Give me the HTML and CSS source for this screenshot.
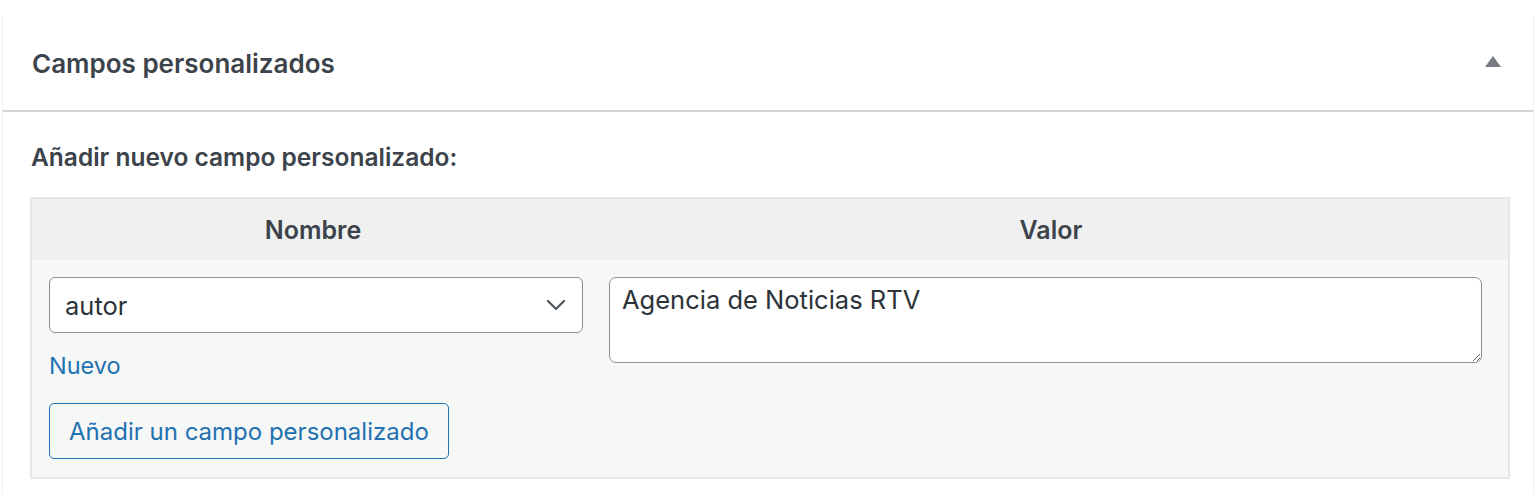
FILE: index.html
```html
<!DOCTYPE html>
<html lang="es">
<head>
<meta charset="utf-8">
<title>Campos personalizados</title>
<link rel="stylesheet" href="styles.css">
</head>
<body>
<div class="postbox">
  <div class="postbox-header">
    <h2 class="hndle">Campos personalizados</h2>
    <span class="toggle-arrow" aria-hidden="true"></span>
  </div>
  <div class="inside">
    <p class="newmeta-title">Añadir nuevo campo personalizado:</p>
    <div class="newmeta">
      <div class="newmeta-head">
        <div class="col-name">Nombre</div>
        <div class="col-value">Valor</div>
      </div>
      <div class="newmeta-body">
        <div class="cell-left">
          <div class="select">
            <span>autor</span>
            <svg class="chevron" width="20" height="12" viewBox="0 0 20 12"><path d="M2 2 L10 10 L18 2" fill="none" stroke="#50575e" stroke-width="2.2" stroke-linecap="round" stroke-linejoin="round"/></svg>
          </div>
          <a class="new-link" href="#">Nuevo</a>
          <button class="add-btn" type="button">Añadir un campo personalizado</button>
        </div>
        <div class="cell-right">
          <textarea class="value" rows="2">Agencia de Noticias RTV</textarea>
        </div>
      </div>
    </div>
  </div>
</div>
</body>
</html>
```
FILE: styles.css
```css
html, body {
  margin: 0;
  padding: 0;
  background: #ffffff;
}
body {
  font-family: "Inter", "Liberation Sans", sans-serif;
  color: #3c434a;
  padding-top: 16px;
}
.postbox {
  margin-left: 2px;
  width: 1532px;
  border-left: 1px solid #f0f0f1;
  border-right: 1px solid #f0f0f1;
  height: 477px;
  box-sizing: border-box;
}
.postbox-header {
  height: 94px;
  border-bottom: 2px solid #d3d4d6;
  display: flex;
  align-items: center;
  justify-content: space-between;
  padding: 0 32px 0 29px;
}
.hndle {
  margin: 0;
  font-size: 26px;
  line-height: 32px;
  font-weight: 600;
  color: #3c434a;
  padding-top: 2px;
}
.toggle-arrow {
  width: 0;
  height: 0;
  border-left: 8px solid transparent;
  border-right: 8px solid transparent;
  border-bottom: 11px solid #787c82;
  margin-bottom: 3px;
}
.inside {
  padding: 0 24px 0 27px;
}
.newmeta-title {
  margin: 29px 0 0 1px;
  font-size: 24.5px;
  font-weight: 600;
  color: #3c434a;
  line-height: 32px;
}
.newmeta {
  margin-top: 24px;
  width: 1480px;
  border: 2px solid #e6e7e8;
  box-sizing: border-box;
  background: #f6f7f7;
}
.newmeta-head {
  display: grid;
  grid-template-columns: 562px 1fr;
  background: #f0f0f1;
  height: 61px;
  align-items: center;
  font-size: 25px;
  line-height: 30px;
  font-weight: 600;
  color: #3c434a;
  text-align: center;
}
.newmeta-body {
  display: grid;
  grid-template-columns: 562px 1fr;
  padding-top: 17px;
  padding-bottom: 18px;
}
.cell-left {
  padding-left: 17px;
  padding-right: 11px;
  display: flex;
  flex-direction: column;
  align-items: flex-start;
}
.select {
  width: 100%;
  height: 56px;
  box-sizing: border-box;
  border: 1px solid #8c8f94;
  border-radius: 6px;
  background: #ffffff;
  display: flex;
  align-items: center;
  justify-content: space-between;
  padding: 0 16px 0 15px;
  font-size: 25.5px;
  color: #2c3338;
}
.chevron {
  display: block;
}
.new-link {
  margin-top: 18px;
  font-size: 23.5px;
  line-height: 30px;
  color: #2271b1;
  text-decoration: none;
}
.add-btn {
  margin-top: 22px;
  height: 56px;
  padding: 0 19px;
  border: 1px solid #2271b1;
  border-radius: 5px;
  background: #f6f7f7;
  color: #2271b1;
  font-family: inherit;
  font-size: 24px;
}
.cell-right {
  padding-left: 15px;
  padding-right: 26px;
}
.value {
  display: block;
  width: 100%;
  height: 86px;
  box-sizing: border-box;
  border: 1px solid #8c8f94;
  border-radius: 7px;
  background: #ffffff;
  padding: 5px 12px;
  font-family: inherit;
  font-size: 25.5px;
  line-height: 34px;
  color: #2c3338;
  resize: vertical;
}
```
